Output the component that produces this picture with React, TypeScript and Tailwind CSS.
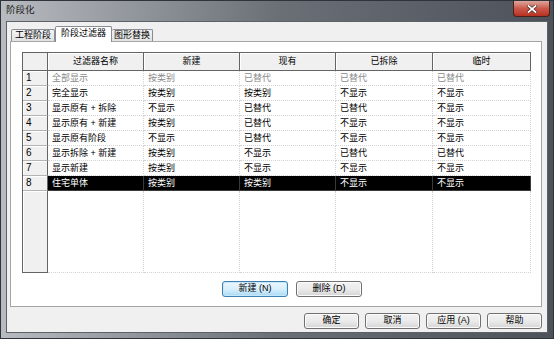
import React from 'react';

const rows: string[][] = [
  ['全部显示', '按类别', '已替代', '已替代', '已替代'],
  ['完全显示', '按类别', '按类别', '不显示', '不显示'],
  ['显示原有 + 拆除', '不显示', '已替代', '已替代', '不显示'],
  ['显示原有 + 新建', '按类别', '已替代', '不显示', '不显示'],
  ['显示原有阶段', '不显示', '已替代', '不显示', '不显示'],
  ['显示拆除 + 新建', '按类别', '不显示', '已替代', '已替代'],
  ['显示新建', '按类别', '不显示', '不显示', '不显示'],
  ['住宅单体', '按类别', '按类别', '不显示', '不显示'],
];

const headers = ['过滤器名称', '新建', '现有', '已拆除', '临时'];

const Button: React.FC<{ label: string; focused?: boolean; className?: string }> = ({ label, focused, className }) => (
  <div
    className={
      focused
        ? `h-[16px] rounded-[3px] border border-[#3c7fb1] bg-gradient-to-b from-[#eaf6fd] via-[#d9f0fc] to-[#a7d9f5] shadow-[inset_0_0_0_1px_#c7e8fa] flex items-center justify-center text-[9px] text-black ${className ?? ''}`
        : `h-[16px] rounded-[3px] border border-[#707070] bg-gradient-to-b from-[#f2f2f2] via-[#ebebeb] to-[#d5d5d5] shadow-[inset_0_0_0_1px_#fcfcfc] flex items-center justify-center text-[9px] text-black ${className ?? ''}`
    }
  >
    {label}
  </div>
);

export default function App() {
  return (
    <div className="w-[554px] h-[339px] flex flex-col bg-gradient-to-r from-[#b8bcc1] via-[#6b7077] to-[#4d525a] border border-[#2f343a] font-['Liberation_Sans','Noto_Sans_CJK_SC',sans-serif] overflow-hidden">
      {/* title bar */}
      <div className="h-[20px] flex items-start justify-between">
        <div className="pl-[5px] pt-[4px] text-[9.5px] leading-none text-[#1c1c1c]">阶段化</div>
        <div className="mr-[3px] w-[37px] h-[16px] rounded-b-[4px] border border-t-0 border-[#4a2019] bg-gradient-to-b from-[#dba79d] via-[#c9574a] to-[#b8301f] flex items-center justify-center">
          <svg width="10" height="8" viewBox="0 0 10 8">
            <path d="M1.5 1 L8.5 7 M8.5 1 L1.5 7" stroke="#3b1a14" strokeWidth="3" strokeLinecap="square" />
            <path d="M1.5 1 L8.5 7 M8.5 1 L1.5 7" stroke="#ffffff" strokeWidth="1.8" strokeLinecap="square" />
          </svg>
        </div>
      </div>

      {/* client area */}
      <div className="flex-1 mx-[5px] mb-[5px] bg-[#f0f0f0] border border-[#5d6268] flex flex-col pl-[3px] pr-[5px] pt-[4px]">
        {/* tabs */}
        <div className="h-[15px] flex items-end pl-[1px] text-[9px] leading-none text-black">
          <div className="w-[44px] h-[12px] border border-b-0 border-[#898c95] rounded-t-[2px] bg-gradient-to-b from-[#f3f3f3] to-[#e2e2e2] flex items-center justify-center">工程阶段</div>
          <div className="w-[57px] h-[16px] -mb-[1px] relative z-10 border border-b-0 border-[#898c95] rounded-t-[2px] bg-white flex items-center justify-center pb-[2px]">阶段过滤器</div>
          <div className="w-[41px] h-[12px] border border-b-0 border-l-0 border-[#898c95] rounded-t-[2px] bg-gradient-to-b from-[#f3f3f3] to-[#e2e2e2] flex items-center justify-center">图形替换</div>
        </div>

        {/* tab panel */}
        <div className="h-[266px] border border-[#a5a5a5] bg-white flex flex-col pl-[11px] pt-[10px]">
          <div className="w-[509px] grid grid-cols-[25px_96px_96px_96px_97px_98px] border-l border-t border-[#646464] text-[9px] leading-none">
            <div className="h-[18px] bg-[#f0f0f0] border-r border-b border-[#646464]" />
            {headers.map((h) => (
              <div key={h} className="h-[18px] bg-[#f0f0f0] border-r border-b border-[#646464] flex items-center justify-center text-black shadow-[inset_1px_1px_0_#ffffff]">
                {h}
              </div>
            ))}
            {rows.map((r, i) => {
              const selected = i === 7;
              const gray = i === 0;
              return (
                <React.Fragment key={i}>
                  <div className="h-[15px] bg-[#f0f0f0] border-r border-r-[#646464] border-b border-b-[#b4b4b4] shadow-[inset_1px_1px_0_#ffffff] flex items-center pl-[3px] text-[10px] font-['Liberation_Sans',sans-serif] text-black">
                    {i + 1}
                  </div>
                  {r.map((c, j) => (
                    <div
                      key={j}
                      className={
                        selected
                          ? 'h-[15px] bg-black text-white border-r border-b border-[#3a3a3a] flex items-center pl-[4px] whitespace-nowrap'
                          : `h-[15px] border-r border-b border-dotted border-[#d2d2d2] flex items-center pl-[4px] whitespace-nowrap ${gray ? 'text-[#8a8a8a]' : 'text-black'}`
                      }
                    >
                      {c}
                    </div>
                  ))}
                </React.Fragment>
              );
            })}
            <div className="h-[82px] bg-[#f0f0f0] border-r border-b border-[#646464] shadow-[inset_1px_1px_0_#ffffff]" />
            {headers.map((h) => (
              <div key={h} className="h-[82px] border-r border-b border-dotted border-[#d2d2d2]" />
            ))}
          </div>

          <div className="mt-[8px] flex gap-[8px] pl-[200px]">
            <Button label="新建 (N)" focused className="w-[66px]" />
            <Button label="删除 (D)" className="w-[66px]" />
          </div>
        </div>

        {/* dialog buttons */}
        <div className="mt-[6px] flex justify-end gap-[6px]">
          <Button label="确定" className="w-[55px]" />
          <Button label="取消" className="w-[55px]" />
          <Button label="应用 (A)" className="w-[55px]" />
          <Button label="帮助" className="w-[55px]" />
        </div>
      </div>
    </div>
  );
}
